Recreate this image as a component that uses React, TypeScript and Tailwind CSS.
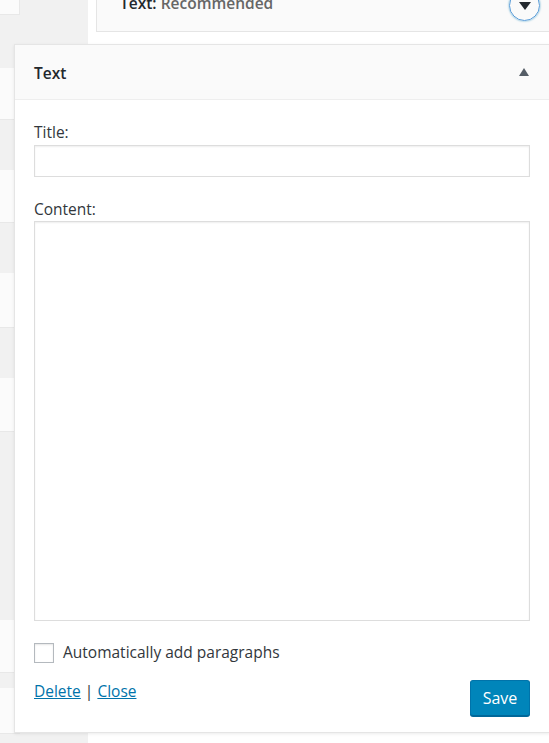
import React from 'react';

const font = {fontFamily: '"Open Sans", "Noto Sans", Arial, sans-serif'};

function LeftStripes() {
  // widget boxes peeking out on the left edge, gaps between them
  const rows: {type: 'box' | 'gap'; h: number}[] = [
    {type: 'box', h: 15},
    {type: 'gap', h: 53},
    {type: 'box', h: 52},
    {type: 'gap', h: 50},
    {type: 'box', h: 53},
    {type: 'gap', h: 50},
    {type: 'box', h: 55},
    {type: 'gap', h: 50},
    {type: 'box', h: 54},
    {type: 'gap', h: 188},
    {type: 'box', h: 53},
    {type: 'gap', h: 15},
    {type: 'box', h: 46},
    {type: 'gap', h: 9},
  ];
  return (
    <div className="w-[88px] shrink-0 flex flex-col bg-[#f1f1f1]">
      {rows.map((r, i) =>
        r.type === 'box'
          ? <div key={i} className="w-[20px] shrink-0 bg-[#fbfbfb] border-r border-b border-[#e8e8e8]" style={{height: r.h}} />
          : <div key={i} className="shrink-0" style={{height: r.h}} />
      )}
    </div>
  );
}

function Background() {
  return (
    <div className="col-start-1 row-start-1 flex h-[743px]">
      <LeftStripes />
      <div className="flex-1 bg-white pl-[8px]">
        <div className="-mt-[24px] h-[56px] bg-[#fafafa] border border-[#e5e5e5] flex items-center justify-between pl-[23px] pr-[9px]">
          <span className="text-[15.5px] font-semibold text-[#23282d]">
            Text<span>:</span> <span className="text-[#666]">Recommended</span>
          </span>
          <div className="w-[31px] h-[31px] rounded-full border border-[#5b9dd9] shadow-[0_0_2px_rgba(30,140,190,0.8)] flex items-center justify-center mt-[2px]">
            <svg width="12" height="9" viewBox="0 0 12 9">
              <path d="M0 1 L12 1 L6 9 Z" fill="#23282d" />
            </svg>
          </div>
        </div>
      </div>
    </div>
  );
}

function Panel() {
  return (
    <div className="ml-[14px] mt-[44px] w-[536px] h-[689px] bg-white border border-[#e5e5e5] shadow-[0_1px_3px_rgba(0,0,0,0.08)] flex flex-col">
      <div className="h-[55px] shrink-0 bg-[#fafafa] border-b border-[#eeeeee] flex items-center justify-between pl-[19px] pr-[20px]">
        <h3 className="mt-[3px] text-[15.5px] font-semibold text-[#23282d]">Text</h3>
        <svg width="10" height="8" viewBox="0 0 10 8">
          <path d="M5 0 L10 8 L0 8 Z" fill="#555d66" />
        </svg>
      </div>
      <div className="flex-1 flex flex-col px-[19px] pt-[21px] text-[15.5px] text-[#32373c]">
        <label className="leading-[22px]">Title:</label>
        <input type="text" className="mt-[2px] h-[32px] border border-[#dddddd] shadow-[inset_0_1px_2px_rgba(0,0,0,0.07)] outline-none px-2" />
        <label className="mt-[21px] leading-[22px]">Content:</label>
        <textarea className="mt-[1px] h-[400px] border border-[#dddddd] shadow-[inset_0_1px_2px_rgba(0,0,0,0.07)] outline-none resize-none" />
        <div className="mt-[20px] flex items-center">
          <span className="w-[20px] h-[20px] border border-[#b4b9be] bg-white shadow-[inset_0_1px_2px_rgba(0,0,0,0.1)]" />
          <span className="ml-[9px]">Automatically add paragraphs</span>
        </div>
        <div className="mt-[16px] flex items-start justify-between">
          <div className="leading-[22px]">
            <a href="#" className="text-[#0073aa] underline">Delete</a>
            <span className="text-[#32373c]"> | </span>
            <a href="#" className="text-[#0073aa] underline">Close</a>
          </div>
          <button className="w-[60px] h-[36px] rounded-[3px] bg-[#0085ba] border border-[#0073aa] border-b-[#006799] shadow-[0_1px_0_#006799] text-white text-[16px]">
            Save
          </button>
        </div>
      </div>
    </div>
  );
}

export default function App() {
  return (
    <div style={font} className="w-[549px] h-[743px] overflow-hidden grid">
      <Background />
      <div className="col-start-1 row-start-1 h-[743px]">
        <Panel />
      </div>
    </div>
  );
}
